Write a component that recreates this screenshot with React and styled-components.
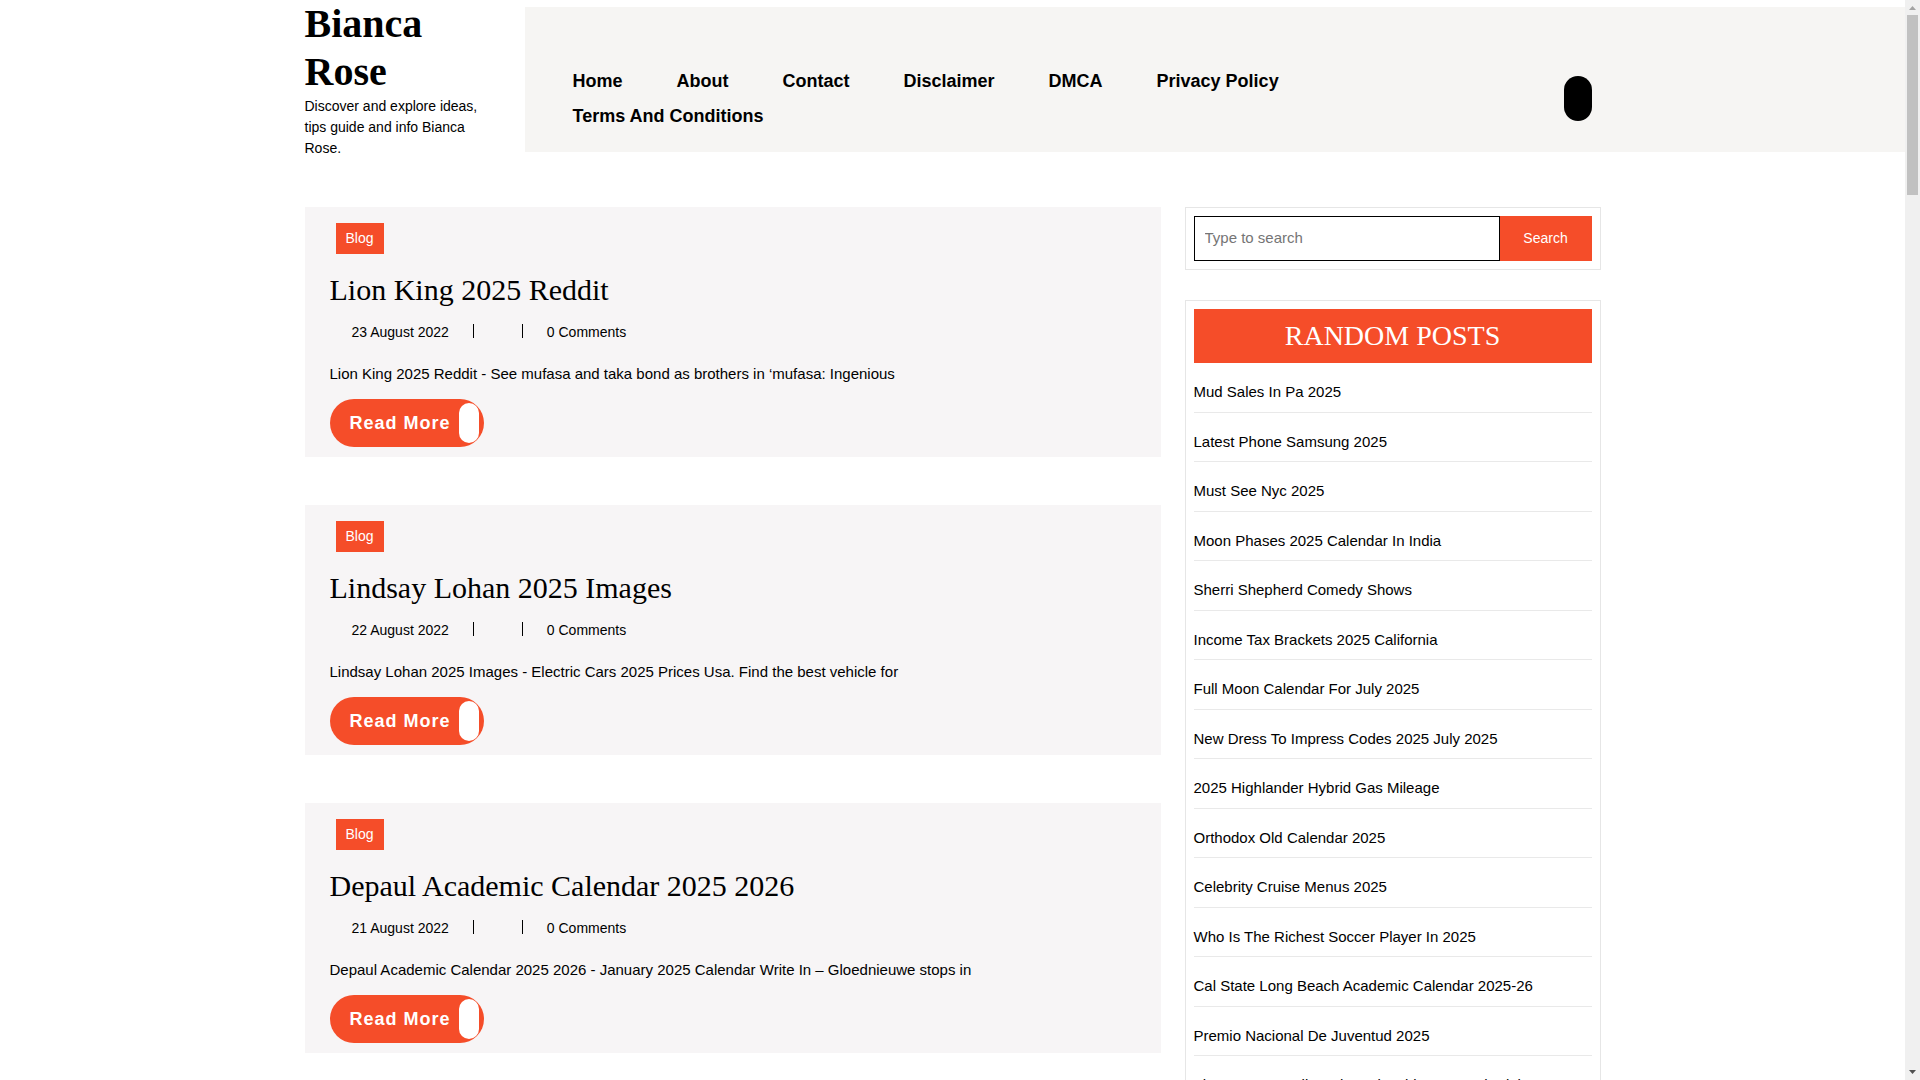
import React from 'react';
import styled, { createGlobalStyle } from 'styled-components';

const ACCENT = '#f54d29';
const SANS = `'Liberation Sans', Arial, sans-serif`;
const SERIF = `'Liberation Serif', 'Times New Roman', serif`;

const NAV = [
  'Home',
  'About',
  'Contact',
  'Disclaimer',
  'DMCA',
  'Privacy Policy',
  'Terms And Conditions',
];

const POSTS = [
  {
    title: 'Lion King 2025 Reddit',
    date: '23 August 2022',
    text:
      'Lion King 2025 Reddit - See mufasa and taka bond as brothers in ‘mufasa: Ingenious',
  },
  {
    title: 'Lindsay Lohan 2025 Images',
    date: '22 August 2022',
    text:
      'Lindsay Lohan 2025 Images - Electric Cars 2025 Prices Usa. Find the best vehicle for',
  },
  {
    title: 'Depaul Academic Calendar 2025 2026',
    date: '21 August 2022',
    text:
      'Depaul Academic Calendar 2025 2026 - January 2025 Calendar Write In – Gloednieuwe stops in',
  },
];

const RANDOM = [
  'Mud Sales In Pa 2025',
  'Latest Phone Samsung 2025',
  'Must See Nyc 2025',
  'Moon Phases 2025 Calendar In India',
  'Sherri Shepherd Comedy Shows',
  'Income Tax Brackets 2025 California',
  'Full Moon Calendar For July 2025',
  'New Dress To Impress Codes 2025 July 2025',
  '2025 Highlander Hybrid Gas Mileage',
  'Orthodox Old Calendar 2025',
  'Celebrity Cruise Menus 2025',
  'Who Is The Richest Soccer Player In 2025',
  'Cal State Long Beach Academic Calendar 2025-26',
  'Premio Nacional De Juventud 2025',
  'The State Wrestling Championship 2025 Schedule',
];

const GlobalStyle = createGlobalStyle`
  *,
  *:before,
  *:after {
    box-sizing: border-box;
  }

  body {
    margin: 0;
    background: #fff;
    color: #000;
    font-family: ${SANS};
    font-size: 15px;
    line-height: 1.5;
  }

  a {
    color: inherit;
    text-decoration: none;
  }

  h1, h2, h3, p, ul {
    margin: 0;
    padding: 0;
  }

  ul {
    list-style: none;
  }
`;

const Shell = styled.div`
  display: flex;
  height: 100vh;
  overflow: hidden;
`;

const Page = styled.div`
  flex: 1 1 0;
  min-width: 0;
  overflow: hidden;
`;

const Header = styled.header`
  display: grid;
  grid-template-columns:
    minmax(12px, 1fr) 220px minmax(0, 1076px)
    minmax(12px, 1fr);
  align-items: center;
`;

const Logo = styled.div`
  grid-column: 2;
  padding-right: 40px;
`;

const SiteTitle = styled.h1`
  font-family: ${SERIF};
  font-size: 40px;
  font-weight: 700;
  line-height: 1.2;
`;

const Tagline = styled.p`
  font-size: 14px;
`;

const NavPanel = styled.div`
  grid-column: 3 / 5;
  display: grid;
  grid-template-columns: subgrid;
  padding: 57px 0 18px;
  background: #f6f5f3;
`;

const NavInner = styled.div`
  display: flex;
  align-items: flex-start;
  justify-content: space-between;
  gap: 100px;
  padding: 0 9px 0 48px;
`;

const NavList = styled.ul`
  display: flex;
  flex-wrap: wrap;
  column-gap: 54px;
`;

const NavLink = styled.a`
  display: block;
  font-size: 18px;
  font-weight: 700;
  line-height: 35px;
`;

const SearchToggle = styled.button`
  flex: none;
  width: 28px;
  height: 45px;
  margin-top: 12px;
  padding: 0;
  border: 0;
  border-radius: 14px;
  background: #000;
`;

const Content = styled.main`
  display: grid;
  grid-template-columns: minmax(0, 856fr) minmax(0, 416fr);
  gap: 24px;
  align-items: start;
  max-width: 1296px;
  margin: 48px auto 0;
`;

const PostList = styled.div`
  display: grid;
  gap: 48px;
`;

const Post = styled.article`
  display: flex;
  flex-direction: column;
  align-items: flex-start;
  padding: 16px 25px 10px;
  background: #f7f5f6;
`;

const Category = styled.a`
  margin-left: 6px;
  padding: 5px 10px;
  background: ${ACCENT};
  color: #fff;
  font-size: 14px;
`;

const PostTitle = styled.h2`
  margin-top: 18px;
  font-family: ${SERIF};
  font-size: 30px;
  font-weight: 400;
  line-height: 1.2;
`;

const Meta = styled.div`
  display: flex;
  gap: 24px;
  margin: 14px 0 19px;
  padding-left: 22px;
  font-size: 14px;
`;

const Author = styled.span`
  width: 50px;
  height: 14px;
  margin-top: 2px;
  border: solid #000;
  border-width: 0 1px;
`;

const Excerpt = styled.p`
  line-height: 23px;
`;

const ReadMore = styled.a`
  display: flex;
  align-items: center;
  gap: 8px;
  margin-top: 14px;
  padding: 4px 5px 4px 20px;
  border-radius: 24px;
  background: ${ACCENT};
  color: #fff;
  font-size: 18px;
  font-weight: 700;
  letter-spacing: 1px;

  &:after {
    content: '';
    width: 20px;
    height: 40px;
    border-radius: 10px;
    background: #fff;
  }
`;

const Sidebar = styled.aside`
  display: grid;
  gap: 30px;
`;

const Widget = styled.section`
  padding: 8px;
  border: 1px solid #e6e6e6;
`;

const SearchForm = styled.form`
  display: flex;
  height: 45px;
`;

const SearchInput = styled.input`
  flex: 1 1 0;
  min-width: 0;
  padding: 0 10px 2px;
  border: 1px solid #000;
  border-radius: 0;
  font-family: inherit;
  font-size: 15px;

  &::placeholder {
    color: #757575;
  }
`;

const SearchButton = styled.button`
  width: 92px;
  padding: 0 0 2px;
  border: 0;
  background: ${ACCENT};
  color: #fff;
  font-family: inherit;
  font-size: 14px;
`;

const WidgetTitle = styled.h3`
  background: ${ACCENT};
  color: #fff;
  font-family: ${SERIF};
  font-size: 28px;
  font-weight: 400;
  line-height: 54px;
  text-align: center;
  text-transform: uppercase;
`;

const RandomItem = styled.li`
  margin-top: 10px;
  padding: 8px 0;
  border-bottom: 1px solid #e9e9e9;
`;

const Scrollbar = styled.div`
  flex: none;
  display: flex;
  flex-direction: column;
  width: 15px;
  background: #f0f0f0;
`;

const Arrow = styled.svg`
  display: block;
  width: 15px;
  height: 15px;
  fill: ${p => (p.$end ? '#505050' : '#a3a3a3')};
`;

const Track = styled.div`
  flex: 1;
  padding: 0 2px;
`;

const Thumb = styled.div`
  height: 180px;
  background: #c1c1c1;
`;

const App = () => (
  <>
    <GlobalStyle />
    <Shell>
      <Page>
        <Header>
          <Logo>
            <SiteTitle>
              <a href="#home">Bianca Rose</a>
            </SiteTitle>
            <Tagline>
              Discover and explore ideas, tips guide and info Bianca Rose.
            </Tagline>
          </Logo>
          <NavPanel>
            <NavInner>
              <nav>
                <NavList>
                  {NAV.map(label => (
                    <li key={label}>
                      <NavLink href="#page">{label}</NavLink>
                    </li>
                  ))}
                </NavList>
              </nav>
              <SearchToggle type="button" aria-label="Open search" />
            </NavInner>
          </NavPanel>
        </Header>
        <Content>
          <PostList>
            {POSTS.map(({ title, date, text }) => (
              <Post key={title}>
                <Category href="#blog">Blog</Category>
                <PostTitle>
                  <a href="#post">{title}</a>
                </PostTitle>
                <Meta>
                  <a href="#date">{date}</a>
                  <Author />
                  <span>0 Comments</span>
                </Meta>
                <Excerpt>{text}</Excerpt>
                <ReadMore href="#post">Read More</ReadMore>
              </Post>
            ))}
          </PostList>
          <Sidebar>
            <Widget>
              <SearchForm role="search">
                <SearchInput
                  type="search"
                  placeholder="Type to search"
                  aria-label="Type to search"
                />
                <SearchButton type="submit">Search</SearchButton>
              </SearchForm>
            </Widget>
            <Widget>
              <WidgetTitle>Random Posts</WidgetTitle>
              <ul>
                {RANDOM.map(title => (
                  <RandomItem key={title}>
                    <a href="#post">{title}</a>
                  </RandomItem>
                ))}
              </ul>
            </Widget>
          </Sidebar>
        </Content>
      </Page>
      <Scrollbar aria-hidden="true">
        <Arrow viewBox="0 0 15 15">
          <path d="M4 10h7L7.5 6z" />
        </Arrow>
        <Track>
          <Thumb />
        </Track>
        <Arrow viewBox="0 0 15 15" $end>
          <path d="M4 5h7L7.5 9z" />
        </Arrow>
      </Scrollbar>
    </Shell>
  </>
);

export default App;
